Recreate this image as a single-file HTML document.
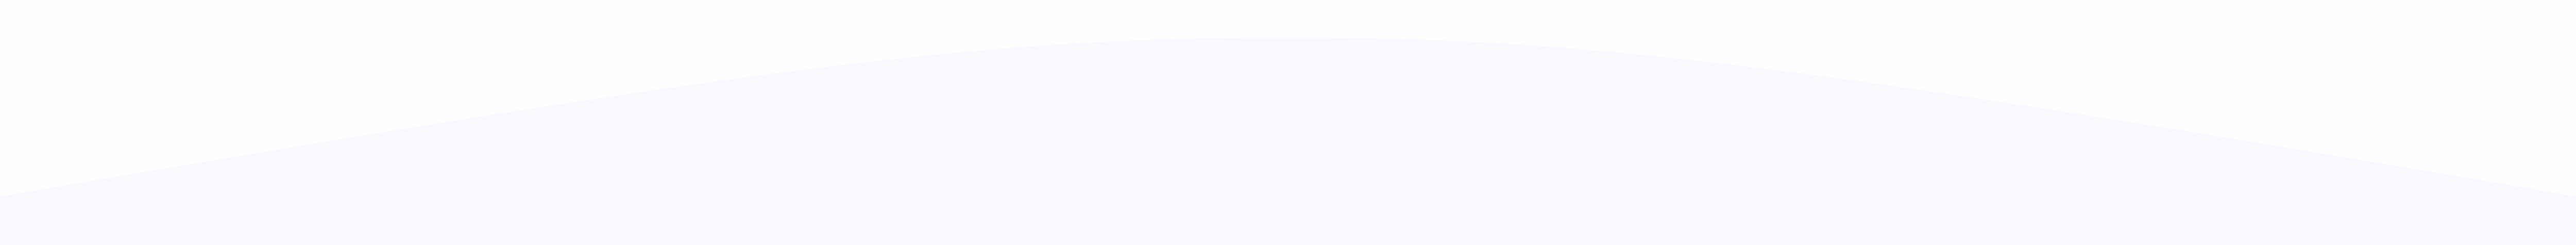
<!DOCTYPE html>
<html><head><meta charset="utf-8"><style>
html,body{margin:0;padding:0;background:#fefefe;width:100%;height:100%;overflow:hidden}
svg{position:fixed;left:0;top:0;width:100vw;height:100vh;display:block}
</style></head><body>
<svg viewBox="0 0 6000 475" preserveAspectRatio="none" xmlns="http://www.w3.org/2000/svg">
<path d="M0 381 C1800 125 2300 73 3000 73 C3700 73 4200 125 6000 381 L6000 475 L0 475 Z" fill="#f8f8fe"/>
</svg>
</body></html>
